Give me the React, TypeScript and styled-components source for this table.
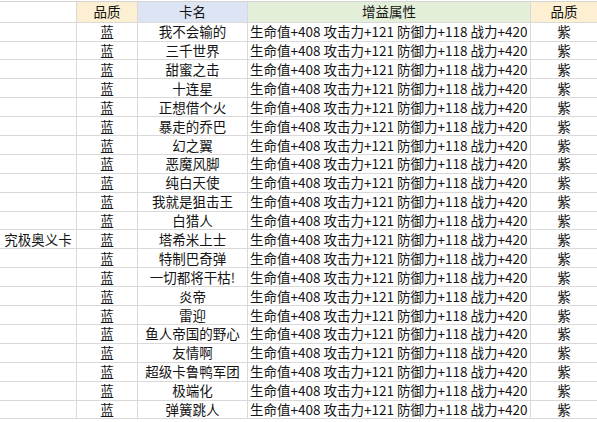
import React from "react";
import styled, { createGlobalStyle } from "styled-components";

const Global = createGlobalStyle`
  html, body { margin: 0; padding: 0; background: #ffffff; }
  body { font-family: "Microsoft YaHei", "Noto Sans CJK SC", "Noto Sans", sans-serif; }
`;

const Sheet = styled.div`
  width: 597px;
  height: 422px;
  overflow: hidden;
  padding-top: 1px;
  box-sizing: border-box;
`;

const Grid = styled.div`
  display: grid;
  grid-template-columns: 77px 61px 110px 283px 66px;
  grid-template-rows: 20.7px;
  grid-auto-rows: 18.9px;
  border-top: 1px solid #d4d4d4;
`;

type CellProps = { $bg?: string; $align?: "left" | "center"; $last?: boolean };

const Cell = styled.div<CellProps>`
  box-sizing: border-box;
  min-width: 0;
  background: ${(p) => p.$bg ?? "#ffffff"};
  border-bottom: 1px solid #d9d9d9;
  border-right: ${(p) => (p.$last ? "none" : "1px solid #d9d9d9")};
  display: flex;
  align-items: center;
  justify-content: ${(p) => (p.$align === "left" ? "flex-start" : "center")};
  padding: ${(p) => (p.$align === "left" ? "0 0 0 2px" : "0")};
  font-size: 13.5px;
  color: #141414;
  white-space: nowrap;
  line-height: 1.25;
`;

const names = [
  "我不会输的",
  "三千世界",
  "甜蜜之击",
  "十连星",
  "正想借个火",
  "暴走的乔巴",
  "幻之翼",
  "恶魔风脚",
  "纯白天使",
  "我就是狙击王",
  "白猎人",
  "塔希米上士",
  "特制巴奇弹",
  "一切都将干枯!",
  "炎帝",
  "雷迎",
  "鱼人帝国的野心",
  "友情啊",
  "超级卡鲁鸭军团",
  "极端化",
  "弹簧跳人",
];

const attr = "生命值+408 攻击力+121 防御力+118 战力+420";

export default function App() {
  return (
    <>
      <Global />
      <Sheet>
        <Grid>
          <Cell />
          <Cell $bg="#fdf0d2">品质</Cell>
          <Cell $bg="#dde4f3">卡名</Cell>
          <Cell $bg="#e3efd9">增益属性</Cell>
          <Cell $bg="#fdf0d2" $last>
            品质
          </Cell>
          {names.map((n, i) => (
            <React.Fragment key={n}>
              <Cell>{i === 11 ? "究极奥义卡" : ""}</Cell>
              <Cell>蓝</Cell>
              <Cell>{n}</Cell>
              <Cell $align="left">{attr}</Cell>
              <Cell $last>紫</Cell>
            </React.Fragment>
          ))}
        </Grid>
      </Sheet>
    </>
  );
}
